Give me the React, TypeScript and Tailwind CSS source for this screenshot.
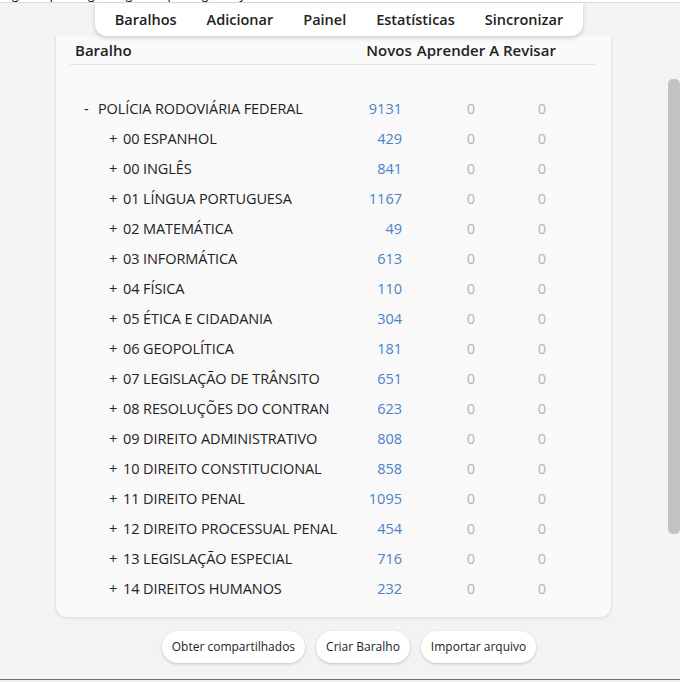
const decks = [
  { name: "00 ESPANHOL", novos: 429 },
  { name: "00 INGLÊS", novos: 841 },
  { name: "01 LÍNGUA PORTUGUESA", novos: 1167 },
  { name: "02 MATEMÁTICA", novos: 49 },
  { name: "03 INFORMÁTICA", novos: 613 },
  { name: "04 FÍSICA", novos: 110 },
  { name: "05 ÉTICA E CIDADANIA", novos: 304 },
  { name: "06 GEOPOLÍTICA", novos: 181 },
  { name: "07 LEGISLAÇÃO DE TRÂNSITO", novos: 651 },
  { name: "08 RESOLUÇÕES DO CONTRAN", novos: 623 },
  { name: "09 DIREITO ADMINISTRATIVO", novos: 808 },
  { name: "10 DIREITO CONSTITUCIONAL", novos: 858 },
  { name: "11 DIREITO PENAL", novos: 1095 },
  { name: "12 DIREITO PROCESSUAL PENAL", novos: 454 },
  { name: "13 LEGISLAÇÃO ESPECIAL", novos: 716 },
  { name: "14 DIREITOS HUMANOS", novos: 232 },
];

function DeckRow({ name, novos, child }: { name: string; novos: number; child?: boolean }) {
  return (
    <div className="flex items-center h-[30px]">
      <div className={`flex items-center w-[293px] ${child ? "pl-[39px]" : "pl-[14px]"}`}>
        <span className="w-[14px]">{child ? "+" : "-"}</span>
        <span className="whitespace-nowrap tracking-[-0.1px]">{name}</span>
      </div>
      <div className="w-[52px] text-right pr-[13px] text-[#4a83c6]">{novos}</div>
      <div className="w-[72px] text-right pr-[12px] text-[#b3b3b3]">0</div>
      <div className="w-[71px] text-right pr-[12px] text-[#b3b3b3]">0</div>
    </div>
  );
}

export default function App() {
  return (
    <div className="w-[680px] h-[682px] bg-[#f3f3f3] flex flex-col overflow-hidden text-[#222] font-['Open_Sans',sans-serif]">
      {/* window title strip, mostly cut off */}
      <div className="h-[3px] bg-white border-b border-[#dcdcdc] overflow-hidden shrink-0">
        <div className="-mt-[14px] pl-[12px] text-[12px] tracking-[14px] whitespace-nowrap text-black">
          g p g g q g y
        </div>
      </div>

      <div className="flex flex-1 min-h-0">
        <div className="w-[668px] flex flex-col">
          {/* Top nav */}
          <div className="flex justify-center pl-[10px] shrink-0">
            <nav className="flex items-center gap-[30px] h-[33px] px-[20px] bg-white rounded-b-[12px] shadow-[0_2px_4px_rgba(0,0,0,0.18)] text-[14.5px] font-semibold relative z-10">
              <span>Baralhos</span>
              <span>Adicionar</span>
              <span>Painel</span>
              <span>Estatísticas</span>
              <span>Sincronizar</span>
            </nav>
          </div>

          {/* Deck list card */}
          <div className="mx-[55px] w-[557px] bg-[#f9f9f9] border border-t-0 border-[#e4e4e4] rounded-b-[12px] shadow-[0_1px_2px_rgba(0,0,0,0.06)] px-[14px] pb-[14px] text-[14.5px]">
            <div className="flex items-center h-[29px] border-b border-[#e2e2e2] mr-[2px] font-semibold text-[15px]">
              <div className="w-[293px] pl-[5px]">Baralho</div>
              <div className="w-[52px] text-center">Novos</div>
              <div className="w-[72px] text-center">Aprender</div>
              <div className="w-[71px] text-center whitespace-nowrap">A Revisar</div>
            </div>
            <div className="pt-[29px] pb-[0px] -mb-[1px]">
              <DeckRow name="POLÍCIA RODOVIÁRIA FEDERAL" novos={9131} />
              {decks.map((d) => (
                <DeckRow key={d.name} name={d.name} novos={d.novos} child />
              ))}
            </div>
          </div>

          {/* Bottom buttons */}
          <div className="flex justify-center gap-[11px] mt-[13px] pl-[30px] text-[12px]">
            <button className="h-[32px] px-[10px] bg-white rounded-full shadow-[0_1px_3px_rgba(0,0,0,0.2)]">Obter compartilhados</button>
            <button className="h-[32px] px-[10px] bg-white rounded-full shadow-[0_1px_3px_rgba(0,0,0,0.2)]">Criar Baralho</button>
            <button className="h-[32px] px-[10px] bg-white rounded-full shadow-[0_1px_3px_rgba(0,0,0,0.2)]">Importar arquivo</button>
          </div>
        </div>

        {/* scrollbar */}
        <div className="w-[12px] pt-[76px]">
          <div className="h-[455px] bg-[#c2c2c2] rounded-[5px]" />
        </div>
      </div>

      <div className="h-[3px] border-t border-[#6e6e6e] bg-[#efefef] shrink-0" />
    </div>
  );
}
